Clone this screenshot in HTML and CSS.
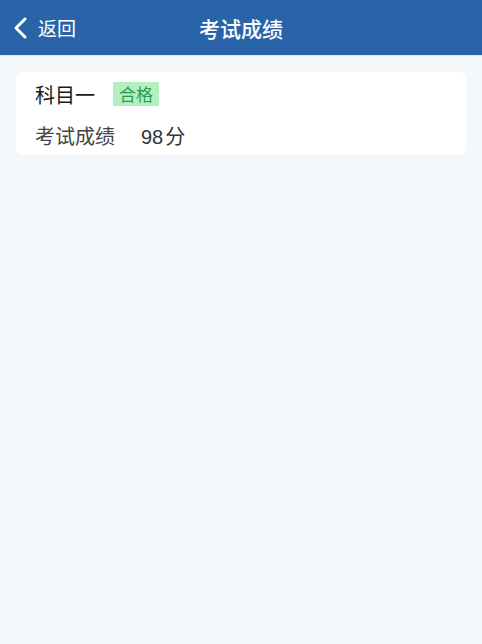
FILE: index.html
```html
<!DOCTYPE html>
<html lang="zh-CN">
<head>
    <meta charset="UTF-8">
    <meta name="viewport" content="width=device-width, initial-scale=1.0">
    <title>考试成绩</title>
    <link rel="stylesheet" href="styles.css">
</head>
<body>
    <div class="navbar">
        <div class="back">
            <svg class="back-icon" width="16" height="22" viewBox="0 0 16 22">
                <path d="M12 2 L3 11 L12 20" fill="none" stroke="#fff" stroke-width="3" stroke-linecap="round" stroke-linejoin="round"/>
            </svg>
            <span>返回</span>
        </div>
        <h1>考试成绩</h1>
    </div>
    <div class="container">
        <div class="score-card">
            <div class="subject-row">
                <span class="subject">科目一</span>
                <span class="tag">合格</span>
            </div>
            <div class="score-row">
                <span class="label">考试成绩</span>
                <span class="score"><span class="score-num">98</span>分</span>
            </div>
        </div>
    </div>
</body>
</html>
```
FILE: styles.css
```css
body {
    margin: 0;
    padding: 0;
    font-family: "Noto Sans CJK SC", "Noto Sans", sans-serif;
    background-color: #f4f8fa;
    min-height: 100vh;
}
.navbar {
    position: relative;
    height: 55px;
    background-color: #2a64a8;
    display: flex;
    align-items: center;
    justify-content: center;
    border-bottom: 1px solid #d8ecf8;
}
.back {
    position: absolute;
    left: 13px;
    top: 0;
    height: 55px;
    display: flex;
    align-items: center;
    gap: 9px;
    color: #fff;
    font-size: 19px;
}
.navbar h1 {
    margin: 0;
    color: #fff;
    font-size: 21px;
    font-weight: 500;
}
.container {
    padding: 16px 16px;
}
.score-card {
    background: #fff;
    border-radius: 6px;
    padding: 8px 20px 5px 19px;
}
.subject-row {
    display: flex;
    align-items: center;
    height: 28px;
}
.subject {
    font-size: 20px;
    color: #1a1a1a;
    margin-right: 18px;
}
.tag {
    background: #b3f0c0;
    color: #2a9a4c;
    font-size: 17px;
    padding: 0 6px;
    height: 24px;
    line-height: 24px;
}
.score-row {
    display: flex;
    align-items: center;
    height: 30px;
    margin-top: 12px;
    font-size: 20px;
    color: #444;
}
.label {
    margin-right: 26px;
}
.score {
    color: #333;
}
.score-num {
    font-family: "Liberation Sans", sans-serif;
    margin-right: 2px;
}
```
